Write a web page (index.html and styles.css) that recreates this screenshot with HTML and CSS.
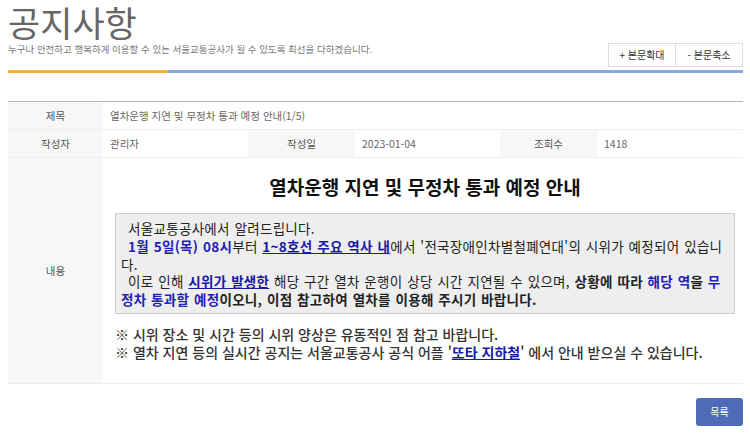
FILE: index.html
```html
<!DOCTYPE html>
<html lang="ko">
<head>
	<meta charset="UTF-8">
	<title>공지사항</title>
	<link rel="stylesheet" href="styles.css">
</head>
<body>
	<div class="page">
		<div class="head">
			<div class="head-text">
				<h1 class="title">공지사항</h1>
				<p class="sub">누구나 안전하고 행복하게 이용할 수 있는 서울교통공사가 될 수 있도록 최선을 다하겠습니다.</p>
			</div>
			<div class="zoom">
				<a href="#">+ 본문확대</a>
				<a href="#">- 본문축소</a>
			</div>
		</div>
		<div class="bar"><span class="bar-on"></span><span class="bar-off"></span></div>

		<div class="board">
			<div class="row row-title">
				<div class="th">제목</div>
				<div class="td">열차운행 지연 및 무정차 통과 예정 안내(1/5)</div>
			</div>
			<div class="row row-info">
				<div class="th">작성자</div>
				<div class="td">관리자</div>
				<div class="th">작성일</div>
				<div class="td">2023-01-04</div>
				<div class="th">조회수</div>
				<div class="td">1418</div>
			</div>
			<div class="row row-body">
				<div class="th th-mid">내용</div>
				<div class="td body">
					<h2 class="notice-h">열차운행 지연 및 무정차 통과 예정 안내</h2>
					<div class="box">
						&ensp;서울교통공사에서 알려드립니다.<br>
						&ensp;<b class="blue">1월 5일(목) 08시</b>부터 <a href="#" class="link">1~8호선 주요 역사 내</a>에서 '전국장애인차별철폐연대'의 시위가 예정되어 있습니다.<br>
						&ensp;이로 인해 <a href="#" class="link">시위가 발생한</a> 해당 구간 열차 운행이 상당 시간 지연될 수 있으며, <b>상황에 따라 <span class="blue">해당 역</span>을 <span class="blue">무정차 통과할 예정</span>이오니, 이점 참고하여 열차를 이용해 주시기 바랍니다.</b>
					</div>
					<p class="note">※ 시위 장소 및 시간 등의 시위 양상은 유동적인 점 참고 바랍니다.</p>
					<p class="note">※ 열차 지연 등의 실시간 공지는 서울교통공사 공식 어플 '<a href="#" class="link">또타 지하철</a>' 에서 안내 받으실 수 있습니다.</p>
				</div>
			</div>
		</div>

		<div class="foot">
			<a href="#" class="btn-list">목록</a>
		</div>
	</div>
</body>
</html>
```

FILE: styles.css
```css
*{
	margin:0;
	padding:0;
	box-sizing:border-box;
	text-decoration:none;
}
body{
	font-family:"Noto Sans CJK KR","Noto Sans",sans-serif;
	color:#666;
	background:#fff;
}
.page{
	width:735px;
	margin:0 8px;
}
.head{
	display:flex;
	justify-content:space-between;
	align-items:flex-end;
	height:67px;
}
.title{
	font-size:35px;
	font-weight:normal;
	color:#666;
	line-height:42px;
}
.sub{
	font-size:9.5px;
	line-height:12px;
	color:#777;
	margin-bottom:12px;
}
.zoom{
	display:flex;
	height:24px;
}
.zoom a{
	display:block;
	width:68px;
	line-height:22px;
	border:1px solid #ddd;
	text-align:center;
	font-size:10px;
	color:#333;
	background:#fff;
}
.zoom a + a{
	border-left:0;
	width:67px;
}
.bar{
	display:flex;
	height:3px;
	margin-top:3px;
}
.bar-on{
	width:160px;
	background:#f0b134;
}
.bar-off{
	flex:1;
	background:#83abd8;
}
.board{
	margin-top:28px;
	border-top:1px solid #a8b7c5;
}
.row{
	display:grid;
	grid-template-columns:95px 1fr;
	border-bottom:1px solid #eee;
}
.row-info{
	grid-template-columns:95px 145px 107px 145px 97px 1fr;
}
.th{
	background:#f7f7f7;
	color:#555;
	font-size:10.5px;
	text-align:center;
	line-height:27px;
}
.th-mid{
	display:flex;
	align-items:center;
	justify-content:center;
}
.td{
	font-size:10.5px;
	line-height:27px;
	padding-left:7px;
	color:#666;
}
.body{
	padding:15px 8px 22px 12px;
	line-height:normal;
	color:#222;
}
.notice-h{
	font-size:19px;
	line-height:28px;
	text-align:center;
	color:#111;
	margin-bottom:12px;
}
.box{
	background:#eee;
	border:1px solid #ccc;
	padding:6px 2px 4px 5px;
	font-size:13.5px;
	letter-spacing:0.3px;
	word-spacing:0.6px;
	line-height:17.75px;
	color:#222;
}
.blue{
	color:#2222b8;
}
.link{
	color:#1a1aa8;
	font-weight:bold;
	text-decoration:underline;
}
.note{
	font-size:14px;
	line-height:18px;
	color:#333;
	font-weight:500;
}
.box + .note{
	margin-top:11px;
}
.foot{
	display:flex;
	justify-content:flex-end;
	margin-top:14px;
}
.btn-list{
	display:block;
	width:47px;
	height:28px;
	line-height:28px;
	text-align:center;
	background:#4d6bb7;
	border-radius:3px;
	color:#fff;
	font-size:10px;
}
```
